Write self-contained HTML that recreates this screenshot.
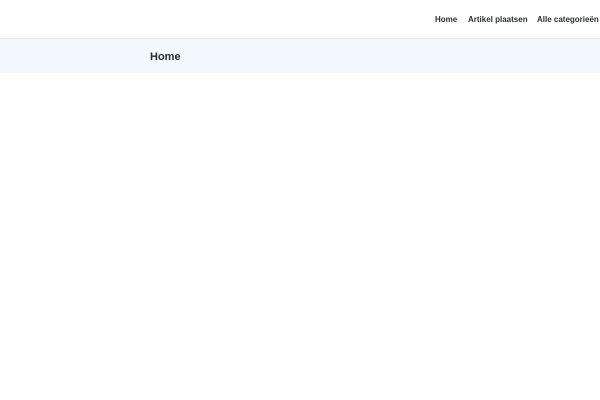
<!DOCTYPE html>
<html><head><meta charset="utf-8"><style>
html,body{margin:0;padding:0;width:600px;height:400px;background:#fff;overflow:hidden;font-family:"Liberation Sans",sans-serif;}
.hdr{position:absolute;left:0;top:0;width:600px;height:38px;background:#fff;border-bottom:1px solid #e6e9ec;}
.nav{position:absolute;top:15px;font-size:8px;font-weight:bold;color:#2b2f36;white-space:nowrap;}
.band{position:absolute;left:0;top:39px;width:600px;height:34px;background:#f2f8fd;}
.title{position:absolute;left:150px;top:51px;font-size:11px;font-weight:bold;color:#2b2f36;white-space:nowrap;}
</style></head><body>
<div class="hdr">
<span class="nav" style="left:435px">Home</span>
<span class="nav" style="left:468px">Artikel plaatsen</span>
<span class="nav" style="left:537px">Alle categorieën</span>
</div>
<div class="band"></div>
<div class="title">Home</div>
</body></html>
